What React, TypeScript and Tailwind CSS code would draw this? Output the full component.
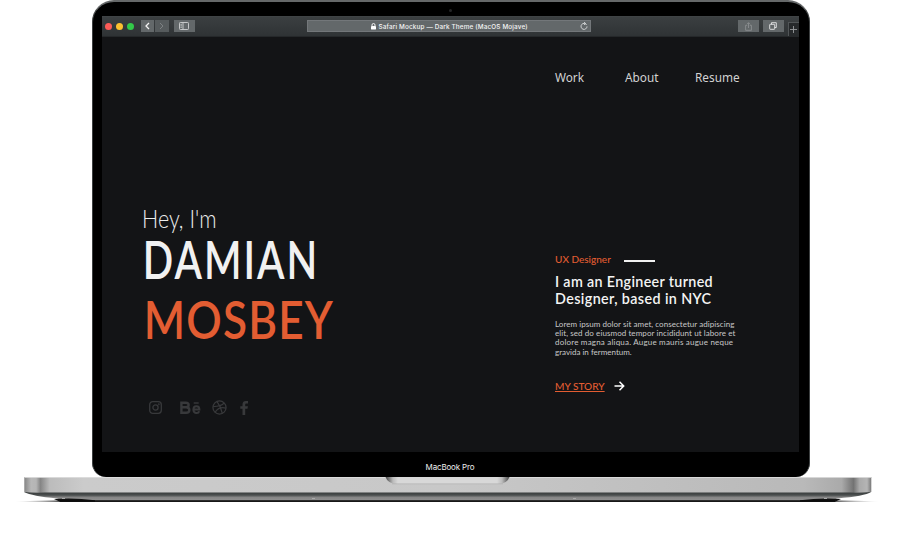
import React from "react";

const display = "font-['Lato','Liberation_Sans',sans-serif]";

function BrowserBar() {
  return (
    <div className="flex h-[21px] shrink-0 items-center border-b border-[#25282a] border-t border-t-[#3f4345] bg-linear-to-b from-[#3b3f41] to-[#2f3335]">
      <div className="ml-[3px] flex gap-1">
        <i className="size-[7px] rounded-full bg-[#fc5b57]" />
        <i className="size-[7px] rounded-full bg-[#fdc02f]" />
        <i className="size-[7px] rounded-full bg-[#33c949]" />
      </div>
      <div className="ml-[7px] flex h-3 gap-px">
        <div className="flex w-[13.5px] items-center justify-center bg-[#63686a]">
          <svg width="5" height="8" viewBox="0 0 5 8" fill="none" stroke="#f4f4f4" strokeWidth="1.3"><path d="M4 1 1 4l3 3" /></svg>
        </div>
        <div className="flex w-[13.5px] items-center justify-center bg-[#565b5d]">
          <svg width="5" height="8" viewBox="0 0 5 8" fill="none" stroke="#7d8183" strokeWidth="1"><path d="m1 1 3 3-3 3" /></svg>
        </div>
      </div>
      <div className="ml-[5px] flex h-3 w-[21px] items-center justify-center bg-[#63686a]">
        <svg width="10" height="8" viewBox="0 0 10 8" fill="none" stroke="#d0d2d3" strokeWidth="0.9"><rect x=".5" y=".5" width="9" height="7" rx=".8" /><path d="M4 .5v7M1.5 2.3h1.3M1.5 3.8h1.3M1.5 5.3h1.3" /></svg>
      </div>
      <div className="ml-[112px] flex h-3 w-[284px] items-center border border-[#73777a] bg-[#63686a] font-['Inter',sans-serif] text-[6.35px] font-medium text-[#f5f5f5]">
        <svg className="ml-[63px] mr-[3px]" width="5" height="7" viewBox="0 0 5 7"><path d="M1 3V2a1.5 1.5 0 0 1 3 0v1" fill="none" stroke="#fff" strokeWidth=".9" /><rect y="3" width="5" height="3.5" rx=".4" fill="#fff" /></svg>
        <span className="w-[149px] whitespace-nowrap pt-[2px] leading-[9px] tracking-[0.025em]">Safari Mockup — Dark Theme (MacOS Mojave)</span>
        <svg className="ml-auto mr-[2px]" width="8" height="8" viewBox="0 0 8 8" fill="none" stroke="#dadbdc" strokeWidth=".9"><path d="M6.6 2.9A3 3 0 1 0 7 4.4M4 .2l1.7 1.3L4 2.8" /></svg>
      </div>
      <div className="ml-[147px] flex h-3 w-[21px] items-center justify-center bg-[#63686a]">
        <svg width="7" height="9" viewBox="0 0 7 9" fill="none" stroke="#8b8f91" strokeWidth=".9"><path d="M2.2 3.3H.6v5h5.8v-5H4.8M3.5 6V.7M2 2.2 3.5.7 5 2.2" /></svg>
      </div>
      <div className="ml-1 flex h-3 w-[21px] items-center justify-center bg-[#63686a]">
        <svg width="8" height="8" viewBox="0 0 8 8" fill="none" stroke="#e7e8e9" strokeWidth=".9"><rect x=".7" y="2.3" width="5" height="5" rx=".5" /><path d="M2.5 2.3V.7h4.8v4.8H5.7" /></svg>
      </div>
      <div className="ml-1 mt-[6px] flex h-[14px] flex-1 items-center justify-center border-l border-t border-[#515557] bg-[#26292b]">
        <svg width="7" height="7" viewBox="0 0 7 7" stroke="#969a9c" strokeWidth=".9"><path d="M3.5 0v7M0 3.5h7" /></svg>
      </div>
    </div>
  );
}

function Socials() {
  return (
    <div className="ml-[7px] mt-[51px] flex h-[16px] items-center text-[#38393b]">
      <svg width="13" height="13" viewBox="0 0 13 13" fill="none" stroke="currentColor" strokeWidth="1.3"><rect x=".7" y=".7" width="11.6" height="11.6" rx="3" /><circle cx="6.5" cy="6.5" r="2.6" /><circle cx="9.8" cy="3.2" r=".3" /></svg>
      <svg className="ml-[18px]" width="21" height="14" viewBox="0 0 21 14" fill="none" stroke="currentColor" strokeWidth="2.4"><path d="M1.4 1.7h4.4c3.8 0 3.8 4.6 0 4.6H1.4m4.7 0c4.3 0 4.3 5.5 0 5.5H1.4V.5" /><path strokeWidth="2" d="M13.2 8.5h6.2c0-4.5-6-4.5-6 0 0 4.4 5 4.4 5.8 1.8" /><path strokeWidth="1.4" d="M13.7 2h5" /></svg>
      <svg className="ml-[11px]" width="15" height="15" viewBox="0 0 24 24" fill="none" stroke="currentColor" strokeWidth="2"><circle cx="12" cy="12" r="10.5" /><path d="M8 2.6c4 5 7 11.5 8.5 19M1.8 10.5c7 0 14-1.2 17.8-5.8M4.8 20c4-7 10-9 17.5-7" /></svg>
      <svg className="ml-[13px]" width="9" height="14" viewBox="0 0 9 14" fill="currentColor"><path d="M2.5 14V7.7H.3V5.2h2.2V3.4C2.5 1.2 3.8 0 5.9 0c1 0 1.9.1 2.1.1v2.3H6.6c-1.1 0-1.4.5-1.4 1.3v1.5h2.7l-.4 2.5H5.2V14z" /></svg>
    </div>
  );
}

function Site() {
  return (
    <div className="flex flex-1 flex-col bg-[#131416]">
      <nav className="ml-[453.5px] mt-[31px] flex h-5 items-center font-['Noto_Sans',sans-serif] text-[11.8px] text-[#d2d2d2]">
        <a className="w-[70px]">Work</a>
        <a className="w-[70px]">About</a>
        <a>Resume</a>
      </nav>
      <main className={`flex ${display}`}>
        <section className="w-[413.5px] pl-10 pt-[117px]">
          <p className="w-max origin-left scale-x-[0.86] whitespace-nowrap text-[25px] font-light leading-[26px] text-[#ececec]">Hey, I'm</p>
          <h1 className="mt-0.5 whitespace-nowrap text-[51px] font-semibold">
            <span className="block h-[60px] w-max origin-left scale-x-[0.785] pl-px leading-[54px] tracking-[0.05em] text-[#f1f1f1]">DAMIAN</span>
            <span className="block h-[56px] w-max origin-left scale-x-[0.865] pl-0.5 leading-[53px] tracking-[0.027em] text-[#e35d32]">MOSBEY</span>
          </h1>
          <Socials />
        </section>
        <section className="ml-10 pt-[164px]">
          <div className="flex h-4 items-center">
            <span className="w-[69px] whitespace-nowrap text-[10px] font-medium text-[#e35d32]">UX Designer</span>
            <i className="mt-[3px] h-[1.5px] w-[31px] bg-[#f1f1f1]" />
          </div>
          <h2 className="mt-[5px] whitespace-nowrap text-[14.3px] font-semibold leading-[17px] text-[#f4f4f4]">
            <span className="block tracking-[0.024em]">I am an Engineer turned</span>
            <span className="block tracking-[0.028em]">Designer, based in NYC</span>
          </h2>
          <p className="mt-[13px] whitespace-nowrap text-[8px] leading-[9.4px] text-[#c8c8c8]">
            <span className="block tracking-[0.006em]">Lorem ipsum dolor sit amet, consectetur adipiscing</span>
            <span className="block tracking-[0.01em]">elit, sed do eiusmod tempor incididunt ut labore et</span>
            <span className="block tracking-[0.025em]">dolore magna aliqua. Augue mauris augue neque</span>
            <span className="block">gravida in fermentum.</span>
          </p>
          <div className="mt-[21px] flex h-4 items-center">
            <a className="w-[59px] whitespace-nowrap text-[10.1px] font-medium text-[#e35d32] underline underline-offset-1">MY STORY</a>
            <svg width="11" height="10" viewBox="0 0 11 10" fill="none" stroke="#fff" strokeWidth="1.5"><path d="M.5 5h9M5.5 .8 9.7 5 5.5 9.2" /></svg>
          </div>
        </section>
      </main>
    </div>
  );
}

function Base() {
  return (
    <svg className="block" width="900" height="27" viewBox="0 0 900 27">
      <defs>
        <linearGradient id="metal">
          <stop offset="0" stopColor="#858585" /><stop offset=".008" stopColor="#b8b8b8" /><stop offset=".014" stopColor="#b5b5b5" /><stop offset=".019" stopColor="#858585" /><stop offset=".03" stopColor="#bcbcbc" /><stop offset=".07" stopColor="#cbcbcb" /><stop offset=".5" stopColor="#c8c8c8" /><stop offset=".92" stopColor="#b9b9b9" /><stop offset=".965" stopColor="#aaa" /><stop offset=".979" stopColor="#737373" /><stop offset=".986" stopColor="#aaa" /><stop offset=".995" stopColor="#b5b5b5" /><stop offset="1" stopColor="#777" />
        </linearGradient>
        <linearGradient id="under" x2="0" y2="1"><stop offset="0" stopColor="#353939" /><stop offset=".35" stopColor="#4b4f4f" /><stop offset=".6" stopColor="#868686" /><stop offset="1" stopColor="#929292" /></linearGradient>
        <linearGradient id="notch"><stop offset="0" stopColor="#444" /><stop offset=".06" stopColor="#bbb" /><stop offset=".1" stopColor="#d8d8d8" /><stop offset=".9" stopColor="#d8d8d8" /><stop offset=".94" stopColor="#bbb" /><stop offset="1" stopColor="#444" /></linearGradient>
        <linearGradient id="shade"><stop offset="0" stopColor="#000" stopOpacity="0" /><stop offset=".06" stopColor="#000" /><stop offset=".94" stopColor="#000" /><stop offset="1" stopColor="#000" stopOpacity="0" /></linearGradient>
      </defs>
      <path d="M14 24.2 60 23.6H835L880 24.2 835 24.7H60z" fill="url(#shade)" />
      <path d="M24 15H871Q865 19 837 21.5L830 24H65L57 21.5Q32 19 24 15" fill="url(#under)" />
      <path d="M54 22Q74 20.5 95 23.2V24.7H60zM841 22Q821 20.5 800 23.2V24.7H835z" fill="#111" />
      <path d="M60 23.2H835V24.7H60z" fill="#0b0b0b" />
      <path d="M24.3 0H871.3V15Q860 16 850 15.6H45Q32 16 24.3 15z" fill="url(#metal)" />
      <path d="M24.5 .5H871" stroke="#e0e0e0" strokeWidth=".8" />
      <path d="M385.5 0H509.5Q507 7 498 7H397Q388 7 385.5 0z" fill="url(#notch)" />
      <path d="M392 6.8H503" stroke="#aaa" strokeWidth=".6" />
      <path d="M62 21.5h3M824 21.5h3M312 21.5h3M573 21.5h3" stroke="#aaa" strokeWidth="1" />
    </svg>
  );
}

export default function App() {
  return (
    <div className="h-[540px] w-[900px] overflow-hidden bg-white">
      <div className="ml-[91.5px] flex h-[477px] w-[718px] flex-col rounded-b-[14px] rounded-t-[22px] border-x border-t-2 border-[#3d4041] border-t-[#656869] bg-black pl-[9px] pr-[10px]">
        <div className="flex h-[13.5px] shrink-0 items-center justify-center pt-[3px]">
          <i className="size-[3px] rounded-full bg-[#242527]" />
        </div>
        <div className="flex h-[436.5px] flex-col">
          <BrowserBar />
          <Site />
        </div>
        <p className="mt-[9px] text-center font-['Inter',sans-serif] text-[8px] leading-[13px] tracking-[-0.02em] text-[#ededed]">MacBook Pro</p>
      </div>
      <Base />
    </div>
  );
}
